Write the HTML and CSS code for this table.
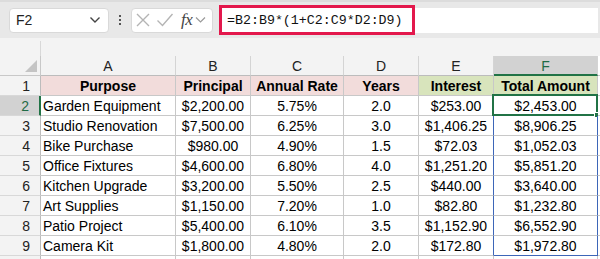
FILE: index.html
```html
<!DOCTYPE html>
<html>
<head>
<meta charset="utf-8">
<link rel="stylesheet" href="styles.css">
</head>
<body>
<div class="toolbar">
  <div class="namebox">
    <span class="nb-text">F2</span>
    <svg class="chev" width="12" height="8" viewBox="0 0 12 8"><path d="M1.5 1.5 L6 6 L10.5 1.5" fill="none" stroke="#444" stroke-width="1.4"/></svg>
  </div>
  <div class="dots"><i></i><i></i><i></i></div>
  <div class="fxbox">
    <svg width="16" height="16" viewBox="0 0 16 16"><path d="M2 2 L14 14 M14 2 L2 14" stroke="#b4b4b4" stroke-width="1.4" fill="none"/></svg>
    <svg width="18" height="16" viewBox="0 0 18 16"><path d="M1.5 8.5 L6.5 13.5 L16.5 2" stroke="#b4b4b4" stroke-width="1.4" fill="none"/></svg>
    <span class="fx">fx</span>
    <svg width="11" height="8" viewBox="0 0 11 8"><path d="M1 1.5 L5.5 6 L10 1.5" fill="none" stroke="#9a9a9a" stroke-width="1.2"/></svg>
  </div>
  <div class="formula">
    <span class="hl">=B2:B9*(1+C2:C9*D2:D9)</span>
  </div>
</div>
<div class="gap"><div class="gap-corner"></div></div>
<div class="sheet">
  <div class="c corner"><span class="tri"></span></div>
  <div class="c ch">A</div>
  <div class="c ch">B</div>
  <div class="c ch">C</div>
  <div class="c ch">D</div>
  <div class="c ch">E</div>
  <div class="c ch sel">F</div>
  <div class="c pad"></div>

  <div class="c rh">1</div>
  <div class="c h pink">Purpose</div>
  <div class="c h pink">Principal</div>
  <div class="c h pink">Annual Rate</div>
  <div class="c h pink">Years</div>
  <div class="c h green">Interest</div>
  <div class="c h green">Total Amount</div>
  <div class="c pad"></div>

  <div class="c rh rsel">2</div>
  <div class="c l">Garden Equipment</div>
  <div class="c">$2,200.00</div>
  <div class="c">5.75%</div>
  <div class="c">2.0</div>
  <div class="c eb">$253.00</div>
  <div class="c fb active">$2,453.00<span class="selbox"><span class="handle"></span></span></div>
  <div class="c pad"></div>

  <div class="c rh">3</div>
  <div class="c l">Studio Renovation</div>
  <div class="c">$7,500.00</div>
  <div class="c">6.25%</div>
  <div class="c">3.0</div>
  <div class="c eb">$1,406.25</div>
  <div class="c fb">$8,906.25</div>
  <div class="c pad"></div>

  <div class="c rh">4</div>
  <div class="c l">Bike Purchase</div>
  <div class="c">$980.00</div>
  <div class="c">4.90%</div>
  <div class="c">1.5</div>
  <div class="c eb">$72.03</div>
  <div class="c fb">$1,052.03</div>
  <div class="c pad"></div>

  <div class="c rh">5</div>
  <div class="c l">Office Fixtures</div>
  <div class="c">$4,600.00</div>
  <div class="c">6.80%</div>
  <div class="c">4.0</div>
  <div class="c eb">$1,251.20</div>
  <div class="c fb">$5,851.20</div>
  <div class="c pad"></div>

  <div class="c rh">6</div>
  <div class="c l">Kitchen Upgrade</div>
  <div class="c">$3,200.00</div>
  <div class="c">5.50%</div>
  <div class="c">2.5</div>
  <div class="c eb">$440.00</div>
  <div class="c fb">$3,640.00</div>
  <div class="c pad"></div>

  <div class="c rh">7</div>
  <div class="c l">Art Supplies</div>
  <div class="c">$1,150.00</div>
  <div class="c">7.20%</div>
  <div class="c">1.0</div>
  <div class="c eb">$82.80</div>
  <div class="c fb">$1,232.80</div>
  <div class="c pad"></div>

  <div class="c rh">8</div>
  <div class="c l">Patio Project</div>
  <div class="c">$5,400.00</div>
  <div class="c">6.10%</div>
  <div class="c">3.5</div>
  <div class="c eb">$1,152.90</div>
  <div class="c fb">$6,552.90</div>
  <div class="c pad"></div>

  <div class="c rh">9</div>
  <div class="c l">Camera Kit</div>
  <div class="c">$1,800.00</div>
  <div class="c">4.80%</div>
  <div class="c">2.0</div>
  <div class="c eb">$172.80</div>
  <div class="c fb last">$1,972.80</div>
  <div class="c pad"></div>

  <div class="c rh tail"></div>
  <div class="c tail"></div>
  <div class="c tail"></div>
  <div class="c tail"></div>
  <div class="c tail"></div>
  <div class="c tail"></div>
  <div class="c tail"></div>
  <div class="c pad tail"></div>
</div>
</body>
</html>
```

FILE: styles.css
```css
* { box-sizing: border-box; }
html, body { margin: 0; padding: 0; background: #fff; }
body {
  width: 600px;
  height: 259px;
  overflow: hidden;
  font-family: "Liberation Sans", Arial, sans-serif;
  color: #000;
}
.toolbar {
  height: 38px;
  background: #e8e8e8;
  display: flex;
  align-items: center;
  padding-left: 9px;
  border-top: 2px solid #dcdcdc;
}
.namebox {
  width: 100px;
  height: 25px;
  background: #fff;
  border: 1px solid #d9d9d9;
  border-radius: 4px;
  display: flex;
  align-items: center;
  justify-content: space-between;
  padding: 0 7px 0 6px;
  font-size: 14px;
  color: #222;
}
.dots {
  width: 22px;
  display: flex;
  flex-direction: column;
  align-items: center;
  gap: 2px;
}
.dots i {
  display: block;
  width: 2px;
  height: 2px;
  background: #555;
}
.fxbox {
  width: 82px;
  height: 25px;
  background: #fff;
  border: 1px solid #d9d9d9;
  border-radius: 4px;
  display: flex;
  align-items: center;
  padding-left: 3px;
  gap: 5px;
}
.fx {
  font-family: "Liberation Serif", "Times New Roman", serif;
  font-style: italic;
  font-size: 17px;
  color: #444;
  margin-left: 2px;
  margin-right: -2px;
  letter-spacing: -0.5px;
}
.formula {
  margin-left: 8px;
  flex: 1;
  height: 25px;
  margin-right: 2px;
  background: #fff;
  display: flex;
  align-items: center;
}
.hl {
  display: flex;
  align-items: center;
  height: 30px;
  width: 196px;
  margin-left: -2px;
  border: 3px solid #e3184c;
  padding-left: 5px;
  font-family: "Liberation Mono", "Courier New", monospace;
  font-size: 13.3px;
  color: #111;
  background: #fff;
}
.gap {
  height: 18px;
  padding-top: 3px;
  background: #f3f3f3;
}
.gap-corner {
  width: 41px;
  height: 15px;
  border-right: 1px solid #d8d8d8;
}
.sheet {
  display: grid;
  grid-template-columns: 41px 135px 75px 93px 75px 75px 104px 2px;
  grid-template-rows: repeat(10, 20px) 3px;
  font-size: 14px;
}
.c {
  border-right: 1px solid #c8c8c8;
  border-bottom: 1px solid #c8c8c8;
  display: flex;
  align-items: center;
  justify-content: center;
  white-space: nowrap;
  padding-top: 1px;
  position: relative;
}
.c.l { justify-content: flex-start; padding-left: 2px; }
.corner {
  background: #f3f3f3;
  border-right-color: #c8c8c8;
}
.tri {
  position: absolute;
  right: 3px;
  bottom: 3px;
  width: 0;
  height: 0;
  border-left: 12px solid transparent;
  border-bottom: 12px solid #c4c4c4;
}
.ch {
  background: #f3f3f3;
  color: #222;
  border-right-color: #d4d4d4;
  border-bottom-color: #bcbcbc;
}
.ch.sel {
  background: #d2d2d2;
  color: #1f6b45;
  border-bottom: 2px solid #217346;
  padding-top: 2px;
}
.rh {
  background: #f3f3f3;
  color: #222;
  justify-content: flex-end;
  padding-right: 10px;
  border-right-color: #bcbcbc;
  border-bottom-color: #d8d8d8;
}
.rh.rsel {
  background: #d2d2d2;
  color: #1f6b45;
  border-right: 2px solid #217346;
}
.h { font-weight: bold; }
.pink { background: #f2dcdb; }
.green { background: #d8e4bc; }
.pad { border-right: none; background: #fff; }
.eb { border-right-color: #3d66b8; }
.fb { border-right-color: #3d66b8; }
.fb.last { border-bottom-color: #3d66b8; }
.tail { border-bottom: none; }
.rh.tail { border-right-color: #bcbcbc; }
.selbox {
  position: absolute;
  left: -2px;
  top: -2px;
  right: -1px;
  bottom: -1px;
  border: 2px solid #217346;
}
.handle {
  position: absolute;
  right: -4px;
  bottom: -4px;
  width: 6px;
  height: 6px;
  background: #217346;
  border: 1px solid #fff;
}
```
